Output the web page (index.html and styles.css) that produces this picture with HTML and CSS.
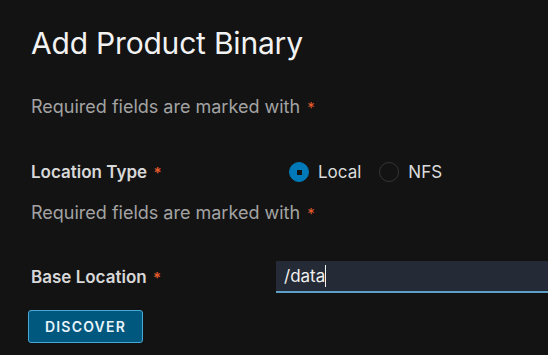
FILE: index.html
```html
<!DOCTYPE html>
<html lang="en">
<head>
    <meta charset="UTF-8">
    <meta name="viewport" content="width=device-width, initial-scale=1.0">
    <title>Add Product Binary</title>
    <link rel="stylesheet" href="styles.css">
</head>
<body>
    <div class="modal">
        <h1>Add Product Binary</h1>

        <p class="hint">Required fields are marked with <span class="req">*</span></p>

        <div class="form-row radio-row">
            <label class="field-label">Location Type <span class="req">*</span></label>
            <div class="radio-group">
                <label class="radio checked"><span class="dot"></span>Local</label>
                <label class="radio"><span class="dot"></span>NFS</label>
            </div>
        </div>

        <p class="hint hint-2">Required fields are marked with <span class="req">*</span></p>

        <div class="form-row input-row">
            <label class="field-label" for="base_location">Base Location <span class="req">*</span></label>
            <div class="input-wrap">
                <span class="input-value">/data</span><span class="caret"></span>
            </div>
        </div>

        <button class="btn">DISCOVER</button>
    </div>
</body>
</html>
```

FILE: styles.css
```css
body {
    margin: 0;
    background: #131313;
    font-family: Inter, 'Noto Sans', sans-serif;
    color: #dcdcdc;
    overflow: hidden;
}
.modal {
    padding: 24px 0 0 31px;
}
h1 {
    margin: 0;
    font-size: 30px;
    font-weight: 400;
    color: #f2f2f2;
    line-height: 38px;
    letter-spacing: -0.2px;
}
.hint {
    margin: 33px 0 0;
    font-size: 18px;
    color: #a3a3a3;
    line-height: 24px;
}
.hint-2 {
    margin-top: 17px;
}
.req {
    color: #e65a2c;
    font-size: 15px;
    margin-left: 2px;
}
.form-row {
    display: flex;
    align-items: center;
}
.radio-row {
    margin-top: 40px;
    height: 24px;
}
.field-label {
    width: 245px;
    font-size: 17px;
    font-weight: 600;
    color: #d8d8d8;
}
.radio-group {
    display: flex;
    gap: 18px;
    padding-left: 13px;
}
.radio {
    display: flex;
    align-items: center;
    gap: 9px;
    font-size: 17px;
    color: #dcdcdc;
}
.dot {
    width: 20px;
    height: 20px;
    border-radius: 50%;
    border: 1px solid #353535;
    box-sizing: border-box;
    display: flex;
    align-items: center;
    justify-content: center;
}
.radio.checked .dot {
    background: #0079b8;
    border-color: #0079b8;
}
.radio.checked .dot::after {
    content: "";
    width: 5px;
    height: 5px;
    background: #111;
}
.input-row {
    margin-top: 35px;
}
.input-wrap {
    flex: 1;
    height: 30px;
    background: #252b36;
    border-bottom: 2px solid #5e9fc8;
    display: flex;
    align-items: center;
    padding-left: 8px;
    font-size: 17px;
    color: #f0f0f0;
}
.caret {
    width: 1px;
    height: 22px;
    background: #f0f0f0;
}
.btn {
    margin: 17px 0 0 -3px;
    width: 115px;
    height: 33px;
    background: #00587f;
    color: #e8f4fa;
    border: 1px solid #49a9d6;
    border-radius: 3px;
    font-family: inherit;
    font-size: 14px;
    font-weight: 600;
    letter-spacing: 1.2px;
    cursor: pointer;
}
```
